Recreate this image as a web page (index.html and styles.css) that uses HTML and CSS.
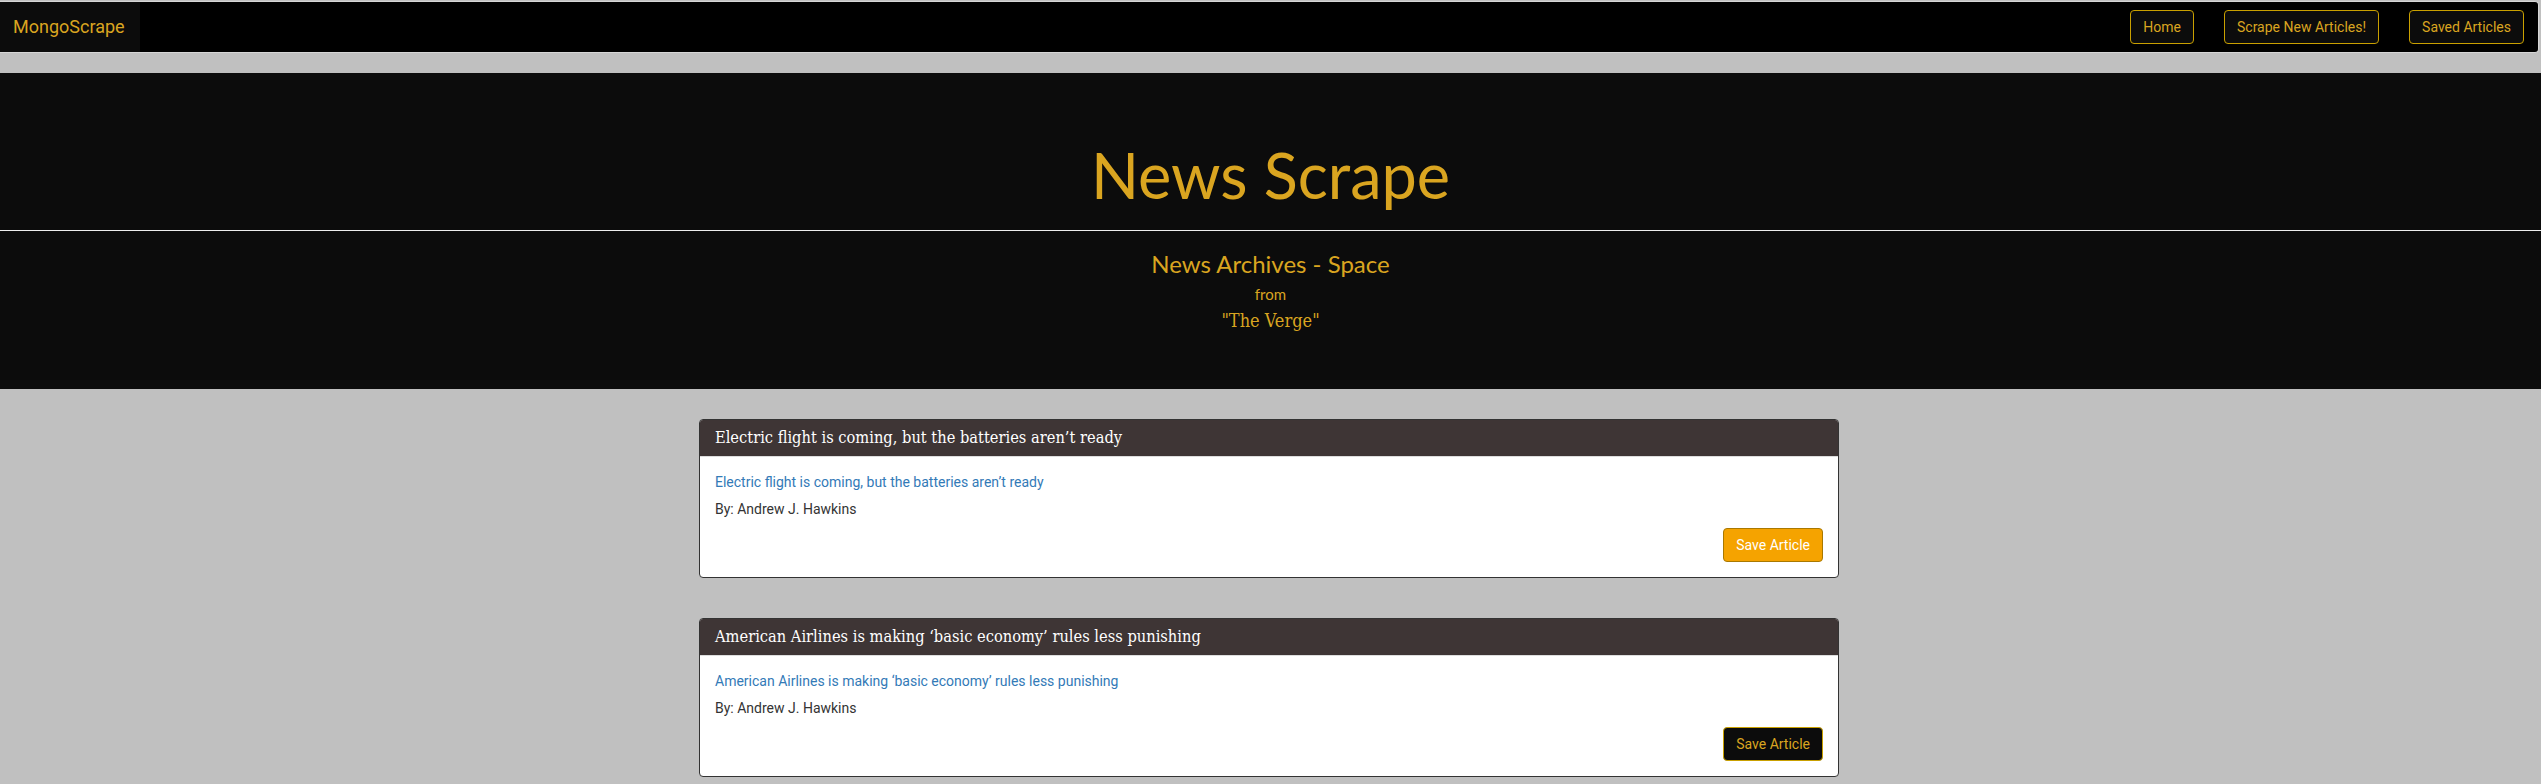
FILE: index.html
```html
<!DOCTYPE html>
<html lang="en">
<head>
<meta charset="utf-8">
<title>MongoScrape</title>
<link rel="stylesheet" href="styles.css">
</head>
<body>
<nav class="navbar">
  <a class="brand" href="#">MongoScrape</a>
  <div class="nav-links">
    <a class="nav-btn" href="#">Home</a>
    <a class="nav-btn" href="#">Scrape New Articles!</a>
    <a class="nav-btn" href="#">Saved Articles</a>
  </div>
</nav>

<header class="jumbotron">
  <h1 class="title">News Scrape</h1>
  <hr class="divider">
  <h3 class="subtitle">News Archives - Space</h3>
  <p class="from">from</p>
  <p class="source">"The Verge"</p>
</header>

<main class="container">
  <article class="card">
    <div class="card-header">
      <h3 class="card-title">Electric flight is coming, but the batteries aren’t ready</h3>
    </div>
    <div class="card-body">
      <p class="card-link"><a href="#">Electric flight is coming, but the batteries aren’t ready</a></p>
      <p class="card-author">By: Andrew J. Hawkins</p>
      <div class="card-actions">
        <button class="save-btn save-btn--orange">Save Article</button>
      </div>
    </div>
  </article>

  <article class="card">
    <div class="card-header">
      <h3 class="card-title">American Airlines is making ‘basic economy’ rules less punishing</h3>
    </div>
    <div class="card-body">
      <p class="card-link"><a href="#">American Airlines is making ‘basic economy’ rules less punishing</a></p>
      <p class="card-author">By: Andrew J. Hawkins</p>
      <div class="card-actions">
        <button class="save-btn save-btn--dark">Save Article</button>
      </div>
    </div>
  </article>
</main>
</body>
</html>
```

FILE: styles.css
```css
* { box-sizing: border-box; }

html, body {
  margin: 0;
  padding: 0;
}

body {
  background: #c0c0c0;
  font-family: Roboto, "Liberation Sans", sans-serif;
  font-size: 14px;
  line-height: 20px;
  color: #333;
  padding-top: 1px;
}

/* ---------- navbar ---------- */
.navbar {
  display: flex;
  align-items: center;
  justify-content: space-between;
  height: 52px;
  margin: 0 2px 20px 0;
  background: #000;
  border: 1px solid #d6d6d6;
  border-left: none;
  border-radius: 0 4px 4px 0;
  padding-right: 14px;
}

.brand {
  display: block;
  width: 140px;
  height: 50px;
  padding: 15px 13px;
  background: #0c0c0c;
  color: #daa520;
  font-size: 18px;
  line-height: 20px;
  text-decoration: none;
}

.nav-links {
  display: flex;
  gap: 30px;
}

.nav-btn {
  display: block;
  padding: 6px 12px;
  height: 34px;
  background: #0c0c0c;
  color: #daa520;
  border: 1px solid #c9a000;
  border-radius: 4px;
  font-size: 14px;
  line-height: 20px;
  text-decoration: none;
  white-space: nowrap;
}

/* ---------- jumbotron ---------- */
.jumbotron {
  background: #0c0c0c;
  color: #daa520;
  text-align: center;
  padding: 67px 0 56px;
  margin-bottom: 30px;
  font-family: Lato, "Open Sans", sans-serif;
}

.title {
  margin: 0;
  font-size: 63px;
  line-height: 70px;
  font-weight: 400;
}

.divider {
  margin: 20px 0 18px;
  border: 0;
  border-top: 1px solid #eee;
  height: 0;
}

.subtitle {
  margin: 0;
  font-size: 24px;
  line-height: 30px;
  font-weight: 400;
}

.from {
  margin: 5px 0 0;
  font-size: 15px;
  line-height: 20px;
}

.source {
  margin: 5px 0 0;
  font-family: "DejaVu Serif", "Liberation Serif", serif;
  font-stretch: condensed;
  font-size: 18px;
  line-height: 24px;
}

/* ---------- cards ---------- */
.container {
  width: 1143px;
  padding-right: 3px;
  margin: 0 auto;
}

.card {
  background: #fff;
  border: 1px solid #333;
  border-radius: 4px;
  margin-bottom: 40px;
  overflow: hidden;
}

.card-header {
  background: #3e3535;
  height: 37px;
  padding: 0 15px;
  border-bottom: 1px solid #ddd;
}

.card-title {
  margin: 0;
  color: #fff;
  font-family: "DejaVu Serif", "Liberation Serif", serif;
  font-stretch: condensed;
  font-weight: 400;
  font-size: 16.3px;
  line-height: 36px;
}

.card-body {
  padding: 15px;
}

.card-body p {
  margin: 0 0 7px;
}

.card-link a {
  color: #337ab7;
  text-decoration: none;
}

.card-author {
  color: #333;
}

.card-actions {
  display: flex;
  justify-content: flex-end;
  padding-top: 2px;
}

.save-btn {
  font-family: Roboto, "Liberation Sans", sans-serif;
  font-size: 14px;
  line-height: 20px;
  padding: 6px 12px;
  height: 34px;
  border-radius: 4px;
  white-space: nowrap;
  cursor: pointer;
}

.save-btn--orange {
  background: #f5a300;
  color: #fff;
  border: 1px solid #a97800;
}

.save-btn--dark {
  background: #0c0c0c;
  color: #daa520;
  border: 1px solid #c9a000;
}
```
